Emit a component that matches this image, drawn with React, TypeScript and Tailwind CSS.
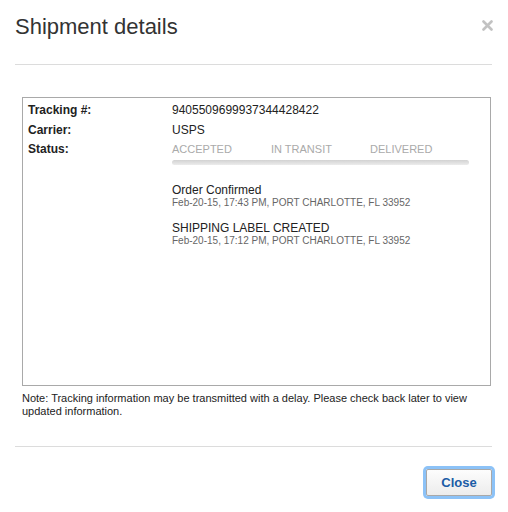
const EVENTS = [
  { title: "Order Confirmed", detail: "Feb-20-15, 17:43 PM, PORT CHARLOTTE, FL 33952" },
  { title: "SHIPPING LABEL CREATED", detail: "Feb-20-15, 17:12 PM, PORT CHARLOTTE, FL 33952" },
]

const STEPS = ["ACCEPTED", "IN TRANSIT", "DELIVERED"]

export default function App() {
  return (
    <div className="w-[508px] h-[512px] bg-white text-[#222] font-['Liberation_Sans',Arial,sans-serif] overflow-hidden">
      {/* header */}
      <div className="flex items-start justify-between pl-[15px] pr-[16px] h-[64px]">
        <h1 className="text-[22px] leading-[26px] text-[#333] mt-[14px]">Shipment details</h1>
        <button className="mt-[20px] mr-[-1px] w-[11px] h-[11px]">
          <svg viewBox="0 0 11 11" width="11" height="11">
            <path d="M1.5 1.5 L9.5 9.5 M9.5 1.5 L1.5 9.5" stroke="#c2c2c2" strokeWidth="2.6" strokeLinecap="round" />
          </svg>
        </button>
      </div>
      <div className="ml-[15px] mr-[16px] h-px bg-[#dcdcdc]" />

      {/* body */}
      <div className="pl-[22px] pr-[17px] pt-[32px]">
        <div className="h-[289px] border border-[#a9a9a9] pl-[5px] pt-[3px] flex">
          <div className="w-[144px] flex flex-col text-[12px] font-bold leading-[19.5px]">
            <span>Tracking #:</span>
            <span>Carrier:</span>
            <span>Status:</span>
          </div>
          <div className="flex flex-col text-[12px] leading-[19.5px]">
            <span>9405509699937344428422</span>
            <span>USPS</span>
            <div className="flex text-[11px] text-[#aaa]">
              {STEPS.map(s => (
                <span key={s} className="w-[99px]">{s}</span>
              ))}
            </div>
            <div className="w-[297px] h-[5px] rounded-full bg-gradient-to-b from-[#d2d2d2] to-[#ececec]" />
            <div className="mt-[18px] flex flex-col gap-[12px]">
              {EVENTS.map(e => (
                <div key={e.title} className="flex flex-col">
                  <span className="text-[12px] leading-[14px] text-[#222]">{e.title}</span>
                  <span className="text-[10px] leading-[12px] text-[#666]">{e.detail}</span>
                </div>
              ))}
            </div>
          </div>
        </div>
        <p className="mt-[6px] text-[11px] leading-[13px] text-[#222]">
          Note: Tracking information may be transmitted with a delay. Please check back later to view updated information.
        </p>
      </div>

      <div className="mt-[28px] ml-[15px] mr-[16px] h-px bg-[#dcdcdc]" />

      {/* footer */}
      <div className="flex justify-end pr-[16px] pt-[22px]">
        <button className="w-[66px] h-[27px] rounded-[2px] border border-[#a8a8a8] bg-gradient-to-b from-[#fdfdfd] to-[#ececec] ring-[3px] ring-[#8cc2f7] text-[13px] font-bold text-[#1b5ca6]">
          Close
        </button>
      </div>
    </div>
  )
}
